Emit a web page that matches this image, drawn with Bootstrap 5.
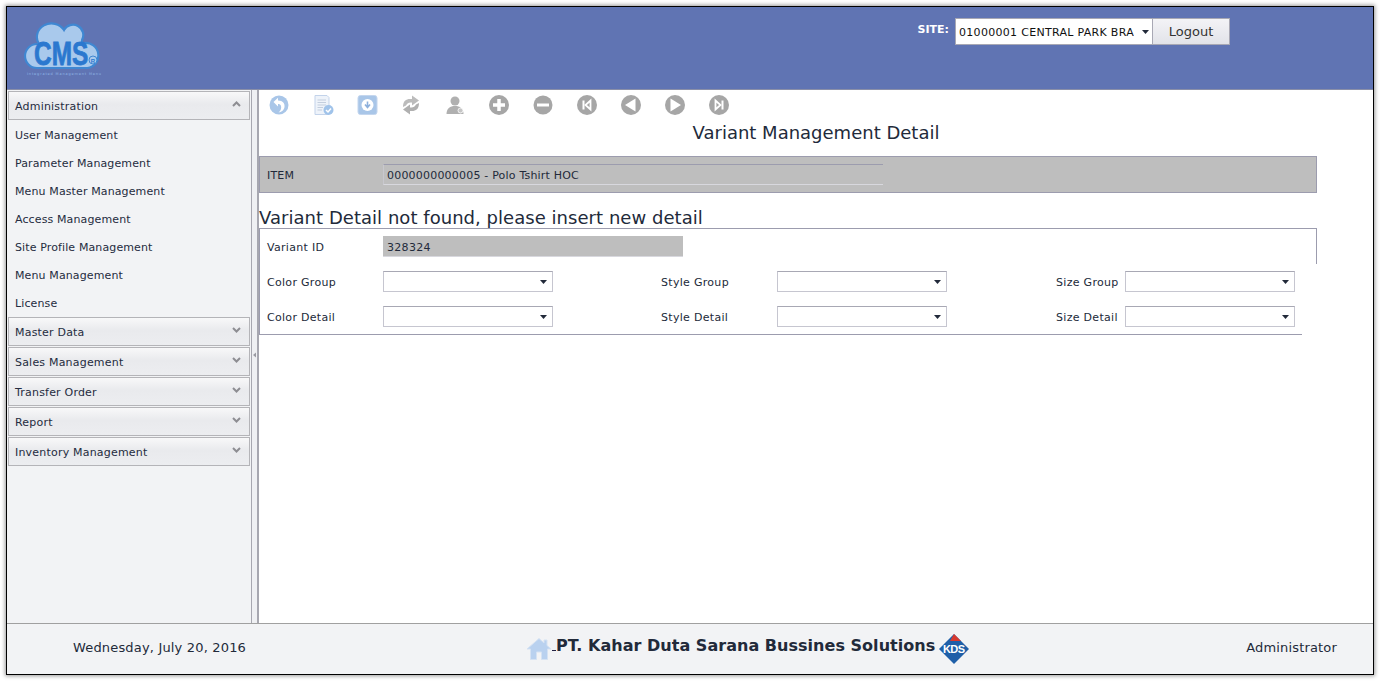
<!DOCTYPE html>
<html lang="en">
<head>
    <meta charset="UTF-8" />
    <title>Variant Management Detail</title>
    <meta name="viewport" content="width=device-width, initial-scale=1" />
    <link href="https://cdn.jsdelivr.net/npm/bootstrap@5.3.0/dist/css/bootstrap.min.css" rel="stylesheet" />
    <style>
        html, body { height: 100%; overflow: hidden; }
        body { background: #fff; padding: 6px 6px 5px 6px; font-family: "DejaVu Sans", Verdana, sans-serif; font-size: 11px; color: #222a3a; }
        .app-shell { height: 669px; width: 1368px; border: 1px solid #000; box-shadow: 0 0 4px 1px #999; display: flex; flex-direction: column; background: #fff; }
        .app-head { height: 83px; flex: none; background: #6074b3; border-bottom: 1px solid #8a8fa8; padding: 11px 143px 0 17px; display: flex; justify-content: space-between; align-items: flex-start; }
        .site-label { color: #fff; font-weight: 700; font-size: 11px; margin: 4px 6px 0 0; }
        .site-select { width: 198px; height: 27px; border: 1px solid #a8a8b4; border-radius: 0; padding: 1px 18px 0 3px; font-size: 11px; letter-spacing: .3px; line-height: 25px; color: #111; background-position: right 3px center; }
        .logout-btn { width: 78px; height: 27px; margin-left: -1px; border: 1px solid #a8a8b4; border-radius: 0; padding: 0; font-size: 13px; color: #333; background: linear-gradient(#f3f3f6, #e2e3e9); }
        .form-select { background-image: url("data:image/svg+xml,%3Csvg xmlns='http://www.w3.org/2000/svg' viewBox='0 0 7 4'%3E%3Cpath d='M0 0H7L3.500 4Z' fill='%23222a3a'/%3E%3C/svg%3E"); background-size: 7px 4px; }
        .app-body { flex: 1; min-height: 0; display: flex; }
        .side-pane { width: 244px; flex: none; background: #f2f3f5; padding: 1px 1px; }
        .acc-head { height: 29px; border: 1px solid #b4b4b8; margin-bottom: 1px; padding: 3px 6px 0; display: flex; justify-content: space-between; align-items: center; color: #252c40; font-size: 11px; letter-spacing: .2px; background: linear-gradient(#f8f8f9, #e9eaed 45%, #ecedf0); }
        .acc-head svg { margin: 0 2px 6px 0; }
        .menu-list { padding: 1px 7px 0; margin-bottom: -1px; }
        .menu-entry { height: 28px; line-height: 28px; color: #252c40; font-size: 11px; letter-spacing: .12px; display: block; text-decoration: none; }
        .split-bar { width: 8px; flex: none; background: #eff0f3; border-left: 1px solid #a7a7b0; border-right: 2px solid #a7a7b0; display: flex; align-items: center; padding-bottom: 3px; }
        .main-pane { flex: 1; min-width: 0; }
        .tool-row { height: 30px; padding: 4px 0 0 9px; display: flex; gap: 22px; }
        .tool-row svg { width: 22px; height: 22px; display: block; }
        .page-title { font-size: 18px; font-weight: 400; text-align: center; width: 1114px; margin: 0; line-height: 26px; color: #222a3a; }
        .item-bar { margin-top: 10px; width: 1058px; height: 37px; background: #bebebe; border: 1px solid #9c9cae; display: flex; align-items: center; padding-left: 7px; letter-spacing: .2px; }
        .item-label { width: 116px; padding-top: 3px; }
        .item-value { width: 500px; height: 21px; border-top: 1px solid #9c9cae; border-bottom: 1px solid #d8d8de; border-left: 1px solid #c8c8ce; padding-left: 3px; line-height: 21px; }
        .notice { font-size: 18px; font-weight: 400; letter-spacing: .04px; margin: 14px 0 -1px; line-height: 22px; color: #222a3a; }
        .form-box { width: 1043px; border-left: 1px solid #9c9cae; border-bottom: 1px solid #9c9cae; height: 107px; letter-spacing: .3px; }
        .id-row { width: 1057px; height: 36px; border-top: 1px solid #9c9cae; border-right: 1px solid #9c9cae; padding: 7px 0 0 7px; display: flex; align-items: flex-start; }
        .id-row label { width: 116px; line-height: 24px; }
        .id-value { width: 300px; height: 21px; background: #bebebe; border-bottom: 1px solid #d8d8de; padding-left: 4px; line-height: 23px; }
        .fields-grid { display: grid; grid-template-columns: 116px 170px 108px 116px 170px 109px 69px 170px; row-gap: 14px; padding: 7px 0 0 7px; width: 1045px; align-items: center; }
        .fields-grid label { padding-top: 3px; }
        .field-select { height: 21px; border: 1px solid #c6c6d0; border-top-color: #a8a8b4; border-radius: 0; padding: 0 18px 0 3px; font-size: 11px; background-position: right 5px center; }
        .app-foot { height: 51px; flex: none; background: #f2f3f5; border-top: 1px solid #a0a0a0; display: flex; align-items: center; padding: 0 36px 3px 66px; font-size: 13px; letter-spacing: .17px; position: relative; color: #222a3a; }
        .foot-center { position: absolute; left: 519px; top: 10px; display: flex; align-items: center; letter-spacing: 0; }
        .foot-title { font-size: 16px; font-weight: 700; letter-spacing: .03px; color: #222a3a; white-space: nowrap; margin-top: -6px; }
        .foot-title u { text-decoration: none; border-bottom: 1px solid #224; display: inline-block; width: 4px; height: 14px; }
    </style>
</head>
<body>

<div class="app-shell">
    <header class="app-head">
        <svg width="78" height="60" viewBox="0 0 78 60">
            <path d="M13 50A12 12 0 0 1 13 26H15A14 13 0 0 1 40 12 10 10 0 0 1 58 22V25H60A12.500 12.500 0 0 1 63.500 50Z" fill="#a9c9ec" stroke="#3f87d2" stroke-width="2.200"/>
            <text transform="translate(10 47) scale(.74 1)" font-family="Liberation Sans, sans-serif" font-weight="700" font-size="33" fill="#2b78cf" stroke="#2b78cf" stroke-width=".8">CMS</text>
            <circle cx="69" cy="42" r="4" fill="#a9c9ec" stroke="#3f87d2"/>
            <text x="69" y="44.500" text-anchor="middle" font-family="Liberation Sans, sans-serif" font-weight="700" font-size="6" fill="#2b78cf">R</text>
            <text x="3" y="57" font-family="DejaVu Sans, sans-serif" font-size="3.500" fill="#8fb4e6" textLength="74">Integrated Management Menu</text>
        </svg>
        <div class="d-flex align-items-start">
            <span class="site-label">SITE:</span>
            <select class="form-select site-select"><option>01000001 CENTRAL PARK BRANCH</option></select>
            <button class="btn logout-btn" type="button">Logout</button>
        </div>
    </header>

    <div class="app-body">
        <aside class="side-pane">
            <div class="acc-head">Administration
                <svg width="9" height="6" viewBox="0 0 9 6"><path d="M1 5 4.500 1.500 8 5" fill="none" stroke="#8d8d92" stroke-width="2"/></svg>
            </div>
            <nav class="menu-list">
                <a class="menu-entry" href="#">User Management</a>
                <a class="menu-entry" href="#">Parameter Management</a>
                <a class="menu-entry" href="#">Menu Master Management</a>
                <a class="menu-entry" href="#">Access Management</a>
                <a class="menu-entry" href="#">Site Profile Management</a>
                <a class="menu-entry" href="#">Menu Management</a>
                <a class="menu-entry" href="#">License</a>
            </nav>
            <div class="acc-head">Master Data
                <svg width="9" height="6" viewBox="0 0 9 6"><path d="M1 1 4.500 4.500 8 1" fill="none" stroke="#8d8d92" stroke-width="2"/></svg>
            </div>
            <div class="acc-head">Sales Management
                <svg width="9" height="6" viewBox="0 0 9 6"><path d="M1 1 4.500 4.500 8 1" fill="none" stroke="#8d8d92" stroke-width="2"/></svg>
            </div>
            <div class="acc-head">Transfer Order
                <svg width="9" height="6" viewBox="0 0 9 6"><path d="M1 1 4.500 4.500 8 1" fill="none" stroke="#8d8d92" stroke-width="2"/></svg>
            </div>
            <div class="acc-head">Report
                <svg width="9" height="6" viewBox="0 0 9 6"><path d="M1 1 4.500 4.500 8 1" fill="none" stroke="#8d8d92" stroke-width="2"/></svg>
            </div>
            <div class="acc-head">Inventory Management
                <svg width="9" height="6" viewBox="0 0 9 6"><path d="M1 1 4.500 4.500 8 1" fill="none" stroke="#8d8d92" stroke-width="2"/></svg>
            </div>
        </aside>

        <div class="split-bar">
            <svg width="5" height="6" viewBox="0 0 5 6"><path d="M4 0.500V5.500L1 3Z" fill="#9a9aa2"/></svg>
        </div>

        <main class="main-pane">
            <div class="tool-row">
                <svg viewBox="0 0 22 22"><circle cx="11" cy="11" r="9.500" fill="#a9c6e8"/><path d="M5.500 8 10 3.800V6.500C15 6.500 17 9.500 16.500 13 16 16.500 13 18 10.500 18.500 13 16.500 13.500 14 13 12 12.500 10.500 11.500 10 10 10V12.500Z" fill="#fff"/></svg>
                <svg viewBox="0 0 22 22"><path d="M3 1.500H15L17 3.500V20.500H3Z" fill="#eef3fa" stroke="#c3d3ea"/><path d="M5.500 6H14M5.500 8.500H14M5.500 11H14M5.500 13.500H11M5.500 16H10" stroke="#c3cede"/><circle cx="16.500" cy="16" r="5" fill="#a0c3ea"/><path d="M14 16 16 18 19 14.500" fill="none" stroke="#fff" stroke-width="1.500"/></svg>
                <svg viewBox="0 0 22 22"><rect x="2" y="1.500" width="19" height="19" rx="2.500" fill="#a9c6e8" stroke="#c4d6ee"/><circle cx="11.500" cy="11" r="6" fill="#fff"/><path d="M11.500 7.500V12.500M9 10.500 11.500 13.500 14 10.500" fill="none" stroke="#8db0dc" stroke-width="1.600"/></svg>
                <svg viewBox="0 0 22 22"><path d="M3 13C3 7 6 5 10 5H12V1.500L19 6.500 12 11.500V8.500H10.500C8.500 8.500 7 9.500 6 11.500Z" fill="#bcbcbc"/><path d="M19 9C19 15 16 17 12 17H10V20.500L3 15.500 10 10.500V13.500H11.500C13.500 13.500 15 12.500 16 10.500Z" fill="#b0b0b0"/></svg>
                <svg viewBox="0 0 22 22"><circle cx="11" cy="7" r="4.500" fill="#b0b0b0"/><path d="M2.500 20C2.500 14.500 6 12 11 12 16 12 19.500 14.500 19.500 20Z" fill="#b0b0b0"/><circle cx="16.500" cy="16.500" r="2.500" fill="#c6c6c6" stroke="#fff" stroke-width=".8"/></svg>
                <svg viewBox="0 0 22 22"><circle cx="11" cy="11" r="10" fill="#a6a6a6"/><path d="M11 5V17M5 11H17" stroke="#fff" stroke-width="3.500"/></svg>
                <svg viewBox="0 0 22 22"><circle cx="11" cy="11" r="9.500" fill="#a6a6a6"/><path d="M5 11H17" stroke="#fff" stroke-width="3"/></svg>
                <svg viewBox="0 0 22 22"><circle cx="11" cy="11" r="10" fill="#a6a6a6"/><path d="M7.500 6.500V15.500" stroke="#fff" stroke-width="2"/><path d="M14.500 6.500V15.500L9.500 11Z" fill="none" stroke="#fff" stroke-width="1.800"/></svg>
                <svg viewBox="0 0 22 22"><circle cx="11" cy="11" r="10" fill="#a6a6a6"/><path d="M15.500 4.500V17.500L5 11Z" fill="#fff"/></svg>
                <svg viewBox="0 0 22 22"><circle cx="11" cy="11" r="10" fill="#a6a6a6"/><path d="M6.500 4.500V17.500L17 11Z" fill="#fff"/></svg>
                <svg viewBox="0 0 22 22"><circle cx="11" cy="11" r="10" fill="#a6a6a6"/><path d="M14.500 6.500V15.500" stroke="#fff" stroke-width="2"/><path d="M7.500 6.500V15.500L12.500 11Z" fill="none" stroke="#fff" stroke-width="1.800"/></svg>
            </div>
            <h1 class="page-title">Variant Management Detail</h1>

            <div class="item-bar">
                <span class="item-label">ITEM</span>
                <div class="item-value">0000000000005 - Polo Tshirt HOC</div>
            </div>

            <h2 class="notice">Variant Detail not found, please insert new detail</h2>
            <div class="form-box">
                <div class="id-row">
                    <label>Variant ID</label>
                    <div class="id-value">328324</div>
                </div>
                <div class="fields-grid">
                    <label>Color Group</label>
                    <select class="form-select field-select"><option></option></select>
                    <span></span>
                    <label>Style Group</label>
                    <select class="form-select field-select"><option></option></select>
                    <span></span>
                    <label>Size Group</label>
                    <select class="form-select field-select"><option></option></select>

                    <label>Color Detail</label>
                    <select class="form-select field-select"><option></option></select>
                    <span></span>
                    <label>Style Detail</label>
                    <select class="form-select field-select"><option></option></select>
                    <span></span>
                    <label>Size Detail</label>
                    <select class="form-select field-select"><option></option></select>
                </div>
            </div>
        </main>
    </div>

    <footer class="app-foot">
        <span>Wednesday, July 20, 2016</span>
        <div class="foot-center">
            <svg width="26" height="24" viewBox="0 0 26 24"><path d="M1 12 13 1.500 18 6V3H21V8.500L25 12H21.500V22.500H15.500V15H10.500V22.500H4.500V12Z" fill="#b9d1ef" stroke="#d5e2f3"/></svg>
            <span class="foot-title"><u></u>PT. Kahar Duta Sarana Bussines Solutions</span>
            <svg class="ms-1" width="30" height="30" viewBox="0 0 30 30"><path d="M15 0 30 15 15 30 0 15Z" fill="#1f5fa8"/><path d="M15 0 22 7H11Z" fill="#d8392f"/><text x="15" y="19" text-anchor="middle" font-family="Liberation Sans, sans-serif" font-weight="700" font-size="11" fill="#fff" textLength="22">KDS</text></svg>
        </div>
        <span class="ms-auto">Administrator</span>
    </footer>
</div>

<script src="https://cdn.jsdelivr.net/npm/bootstrap@5.3.0/dist/js/bootstrap.bundle.min.js"></script>
</body>
</html>
